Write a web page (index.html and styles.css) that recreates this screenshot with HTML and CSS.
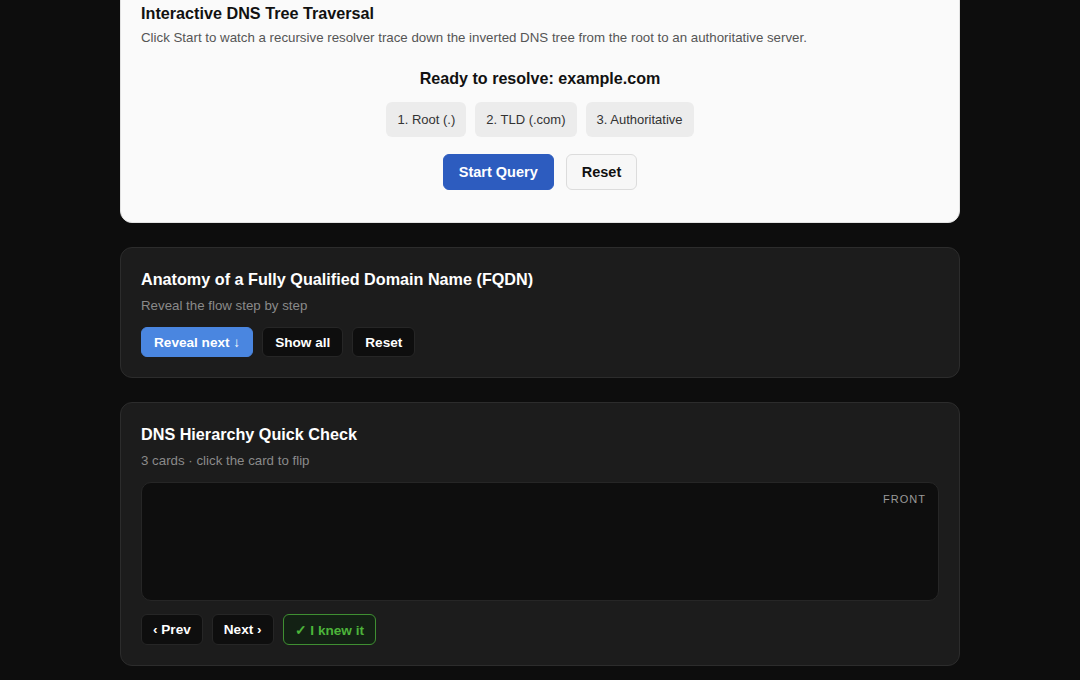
FILE: index.html
```html
<!DOCTYPE html>
<html>
<head>
<meta charset="utf-8">
<link rel="stylesheet" href="styles.css">
</head>
<body>
<main class="page">
  <section class="card card-light">
    <h2 class="card-title">Interactive DNS Tree Traversal</h2>
    <p class="card-sub">Click Start to watch a recursive resolver trace down the inverted DNS tree from the root to an authoritative server.</p>
    <div class="resolver">
      <div class="status">Ready to resolve: example.com</div>
      <div class="chips">
        <span class="chip">1. Root (.)</span>
        <span class="chip">2. TLD (.com)</span>
        <span class="chip">3. Authoritative</span>
      </div>
      <div class="actions">
        <button class="btn btn-primary">Start Query</button>
        <button class="btn btn-light">Reset</button>
      </div>
    </div>
  </section>

  <section class="card card-dark">
    <h2 class="card-title">Anatomy of a Fully Qualified Domain Name (FQDN)</h2>
    <p class="card-sub">Reveal the flow step by step</p>
    <div class="row">
      <button class="dbtn dbtn-blue">Reveal next ↓</button>
      <button class="dbtn">Show all</button>
      <button class="dbtn">Reset</button>
    </div>
  </section>

  <section class="card card-dark">
    <h2 class="card-title">DNS Hierarchy Quick Check</h2>
    <p class="card-sub">3 cards · click the card to flip</p>
    <div class="flashcard">
      <span class="face-label">FRONT</span>
    </div>
    <div class="row row-flash">
      <button class="dbtn">‹ Prev</button>
      <button class="dbtn">Next ›</button>
      <button class="dbtn dbtn-green">✓ I knew it</button>
    </div>
  </section>
</main>
</body>
</html>
```

FILE: styles.css
```css
* { box-sizing: border-box; }
html, body {
  margin: 0;
  background: #0d0d0d;
  font-family: "Liberation Sans", Arial, sans-serif;
}
.page {
  width: 840px;
  margin: -25px auto 0;
  display: flex;
  flex-direction: column;
  gap: 24px;
  padding-bottom: 40px;
}
.card {
  border-radius: 12px;
  padding: 20px;
}
.card-light {
  background: #fafafa;
  padding: 26px 20px 32px;
  border: 1px solid #e2e2e2;
}
.card-dark {
  background: #1c1c1c;
  border: 1px solid #2c2c2c;
}
.card-title {
  margin: 0;
  font-size: 16.2px;
  font-weight: 700;
  line-height: 22px;
  color: #fff;
}
.card-light .card-title { color: #111; }
.card-sub {
  margin: 5px 0 0;
  font-size: 13.3px;
  line-height: 18px;
  color: #8a8a8a;
}
.card-light .card-sub { color: #555; }
.card-dark .card-sub { margin-top: 7px; }

.resolver {
  display: flex;
  flex-direction: column;
  align-items: center;
  margin-top: 20px;
}
.status {
  font-size: 16.1px;
  font-weight: 700;
  line-height: 22px;
  color: #111;
}
.chips {
  display: flex;
  gap: 9px;
  margin-top: 13px;
}
.chip {
  background: #ececec;
  border-radius: 6px;
  padding: 0 11px;
  height: 35px;
  line-height: 35px;
  font-size: 13px;
  color: #333;
}
.actions {
  display: flex;
  gap: 12px;
  margin-top: 17px;
}
.btn {
  font-family: "Liberation Sans", Arial, sans-serif;
  font-size: 14.5px;
  font-weight: 700;
  height: 36px;
  border-radius: 6px;
  padding: 0 15px;
  cursor: pointer;
}
.btn-primary {
  background: #2d5cbf;
  color: #fff;
  border: 1px solid #2d5cbf;
}
.btn-light {
  background: #f7f7f7;
  color: #111;
  border: 1px solid #dcdcdc;
}

.row {
  display: flex;
  gap: 9px;
  margin-top: 12px;
}
.dbtn {
  font-family: "Liberation Sans", Arial, sans-serif;
  font-size: 13.6px;
  font-weight: 700;
  height: 30px;
  padding: 0 12px;
  border-radius: 6px;
  background: #0e0e0e;
  border: 1px solid #262626;
  color: #fff;
  cursor: pointer;
}
.row-flash .dbtn { height: 31px; padding: 0 11px; }
.dbtn-blue {
  background: #4a86e0;
  border-color: #4a86e0;
}
.row-flash .dbtn-green {
  background: #132114;
  border-color: #3f8f32;
  color: #4cb43a;
}
.flashcard {
  position: relative;
  margin-top: 12px;
  height: 119px;
  background: #0e0e0e;
  border: 1px solid #262626;
  border-radius: 10px;
}
.row-flash { margin-top: 13px; }
.face-label {
  position: absolute;
  top: 10px;
  right: 12px;
  font-size: 11px;
  letter-spacing: 1px;
  color: #9a9a9a;
}
```
